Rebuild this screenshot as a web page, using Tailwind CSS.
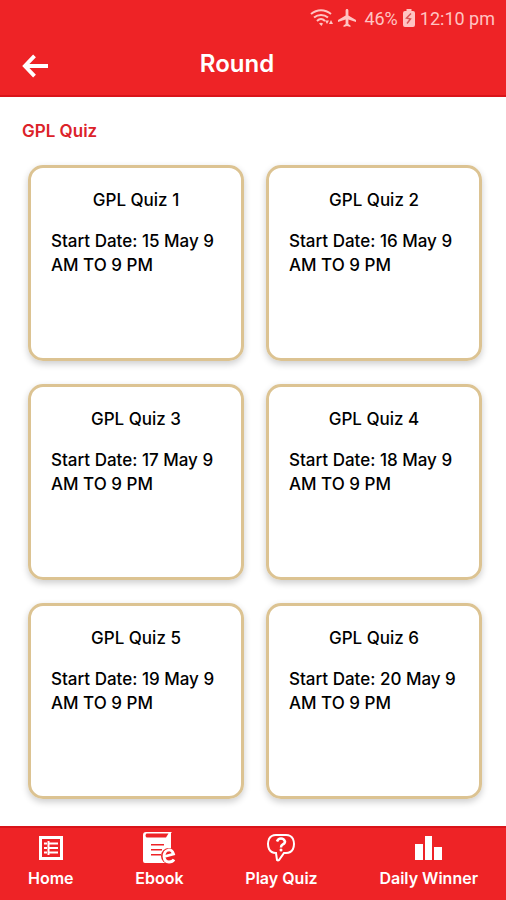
<!DOCTYPE html>
<html lang="en">
<head>
<meta charset="utf-8">
<meta name="viewport" content="width=device-width, initial-scale=1">
<title>Round</title>
<script src="https://cdn.jsdelivr.net/npm/@tailwindcss/browser@4"></script>
</head>
<body class="flex min-h-screen flex-col bg-white font-['Inter','Liberation_Sans',sans-serif] font-medium text-black">
<header class="border-b-2 border-[#d9141a] bg-[#ee2326] text-white">
  <div class="flex h-9 items-center justify-end pr-[11px] font-['Roboto',sans-serif] text-[18px] font-normal text-[#ffc4c2]">
    <svg class="mr-1 h-5 w-6" viewBox="0 0 24 20" fill="none" stroke="currentColor" stroke-width="2" aria-label="Wi-Fi">
      <path d="M1 6C7 1 15 1 21 6M4 9.500C8 6 14 6 18 9.500M7 13C9.500 10.500 12.500 10.500 15 13"/>
      <path d="M9 15.500Q11 14 13 15.500L11.500 18Z" fill="currentColor" stroke="none"/>
      <path d="M15 12.500h4l-2 3.500zM19 16h4l-2-4z" fill="currentColor" stroke="none"/>
    </svg>
    <svg class="mr-2 h-[18px] w-[18px]" viewBox="0 0 18 18" fill="currentColor" aria-label="Airplane mode"><path d="M9 0c.9 0 1.400.7 1.400 1.600v4.800L18 11v1.900l-7.600-2.300v4.300l2.100 1.600V18L9 17l-3.500 1v-1.500l2.100-1.600v-4.300L0 12.900V11l7.600-4.600V1.600C7.600.7 8.100 0 9 0z"/></svg>
    <span>46%</span>
    <svg class="mx-[5px] h-[18px] w-3" viewBox="0 0 12 18" aria-label="Battery"><path fill="currentColor" d="M3.500 0h5v2H10q2 0 2 2v12q0 2-2 2H2q-2 0-2-2V4q0-2 2-2h1.500z"/><path d="M8 4.500 3.500 9l4 1L4 14.500" fill="none" stroke="#d95556" stroke-width="1.500"/></svg>
    <span>12:10 pm</span>
  </div>
  <div class="grid h-[59px] grid-cols-[48px_1fr_48px] items-center px-4">
    <button type="button" aria-label="Back" class="flex h-10 w-10 items-center pl-[6px]">
      <svg class="h-6 w-[26px] shrink-0" viewBox="0 0 27 24" fill="none" stroke="currentColor" stroke-width="4"><path d="M13 1.500 3 12l10 10.500M3 12h24"/></svg>
    </button>
    <h1 class="pr-8 pb-1 text-center text-[24px] font-semibold">Round</h1>
  </div>
</header>
<main class="flex-1 pr-6 pb-6 pl-7">
  <h2 class="-ml-[6px] pt-5 text-[17px] leading-7 font-semibold text-[#dc2229]">GPL Quiz</h2>
  <div class="grid grid-cols-2 gap-x-[22px] gap-y-[23px] pt-5">
    <article class="min-h-[196px] rounded-[15px] border-[3px] border-[#dcc392] px-5 pt-5 shadow-[0_3px_7px_rgba(0,0,0,0.2)]"><h3 class="text-center text-[17px] leading-6">GPL Quiz 1</h3><p class="-mr-3 pt-[17px] text-[17px] leading-6">Start Date: 15 May 9<br>AM TO 9 PM</p></article>
    <article class="min-h-[196px] rounded-[15px] border-[3px] border-[#dcc392] px-5 pt-5 shadow-[0_3px_7px_rgba(0,0,0,0.2)]"><h3 class="text-center text-[17px] leading-6">GPL Quiz 2</h3><p class="-mr-3 pt-[17px] text-[17px] leading-6">Start Date: 16 May 9<br>AM TO 9 PM</p></article>
    <article class="min-h-[196px] rounded-[15px] border-[3px] border-[#dcc392] px-5 pt-5 shadow-[0_3px_7px_rgba(0,0,0,0.2)]"><h3 class="text-center text-[17px] leading-6">GPL Quiz 3</h3><p class="-mr-3 pt-[17px] text-[17px] leading-6">Start Date: 17 May 9<br>AM TO 9 PM</p></article>
    <article class="min-h-[196px] rounded-[15px] border-[3px] border-[#dcc392] px-5 pt-5 shadow-[0_3px_7px_rgba(0,0,0,0.2)]"><h3 class="text-center text-[17px] leading-6">GPL Quiz 4</h3><p class="-mr-3 pt-[17px] text-[17px] leading-6">Start Date: 18 May 9<br>AM TO 9 PM</p></article>
    <article class="min-h-[196px] rounded-[15px] border-[3px] border-[#dcc392] px-5 pt-5 shadow-[0_3px_7px_rgba(0,0,0,0.2)]"><h3 class="text-center text-[17px] leading-6">GPL Quiz 5</h3><p class="-mr-3 pt-[17px] text-[17px] leading-6">Start Date: 19 May 9<br>AM TO 9 PM</p></article>
    <article class="min-h-[196px] rounded-[15px] border-[3px] border-[#dcc392] px-5 pt-5 shadow-[0_3px_7px_rgba(0,0,0,0.2)]"><h3 class="text-center text-[17px] leading-6">GPL Quiz 6</h3><p class="-mr-3 pt-[17px] text-[17px] leading-6">Start Date: 20 May 9<br>AM TO 9 PM</p></article>
  </div>
</main>
<nav class="flex justify-between border-t-2 border-[#d9141a] bg-[#ee2326] px-7 pt-[2px] pb-[10px] text-[16px] leading-6 font-semibold text-white">
  <a href="#" class="flex flex-col items-center"><span class="flex h-9 items-center"><svg class="h-6 w-6" viewBox="0 0 24 24" fill="none" stroke="currentColor" aria-hidden="true"><path stroke-width="3" d="M1.500 1.500h21v21h-21z"/><path stroke-width="2" d="M5 7.500h3M10 7.500h9M5 12h3M10 12h9M5 16.500h3M10 16.500h9M9.500 5v14"/></svg></span>Home</a>
  <a href="#" class="flex flex-col items-center"><span class="flex h-9 items-center"><svg class="h-[34px] w-[34px]" viewBox="0 0 34 34" aria-hidden="true"><path fill="currentColor" d="M4 1h26l-1 1v30H3q-2 0-2-2V4q0-3 3-3z"/><path fill="#ee2326" d="M4.500 2.500h22L24 6.500H4.500q-2-2 0-4zM9 13h13v1.500H9zM9 18h11v1.500H9zM9 23h10v1.500H9z"/><circle cx="27" cy="25" r="8" fill="#ee2326"/><path d="M22.500 25.500 31.500 23Q30 18.500 26.500 19 22 20 22 25.500 22.500 31 27 31q3.500 0 5-2.500" fill="none" stroke="currentColor" stroke-width="2.800"/></svg></span>Ebook</a>
  <a href="#" class="flex flex-col items-center"><span class="flex h-9 items-center"><svg class="h-[30px] w-[30px]" viewBox="0 0 30 30" fill="none" stroke="currentColor" stroke-width="2" aria-hidden="true"><path d="M10 2h10q5 0 7 4 2 5 0 10-2 4-7 4h-2l-5 7q-1 1-2 0l-1-7q-5 0-7-4-2-5 0-10 2-4 7-4z"/><path stroke-width="2.500" d="M11 8.500q1-3 4-3t4 3q0 2-2.500 3.200Q15 12.500 15 14.500"/><circle cx="15" cy="17" r="1.500" fill="currentColor" stroke="none"/></svg></span>Play Quiz</a>
  <a href="#" class="flex flex-col items-center"><span class="flex h-9 items-center"><svg class="h-6 w-[27px]" viewBox="0 0 27 24" fill="currentColor" aria-hidden="true"><path d="M0 8h8v16H0zM10 0h7v24h-7zM19 11h8v13h-8z"/></svg></span>Daily Winner</a>
</nav>
</body>
</html>
